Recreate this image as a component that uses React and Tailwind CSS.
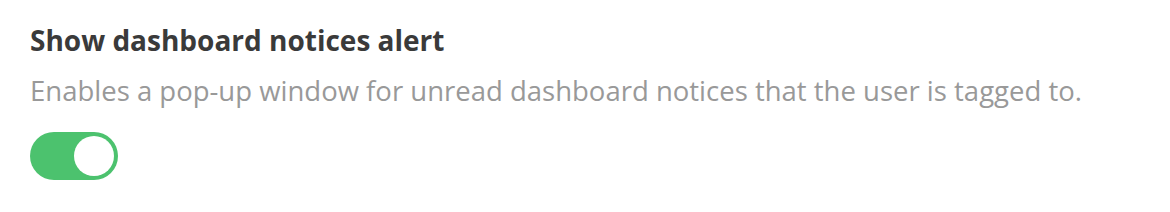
export default function App() {
  return (
    <div className="w-[1170px] h-[212px] bg-white" style={{ fontFamily: '"Open Sans", sans-serif' }}>
      <div className="pl-[30px] pt-[22px]">
        <h2 className="text-[28px] leading-[36px] font-bold text-[#3a3a3a]">Show dashboard notices alert</h2>
        <p className="mt-[15px] text-[27.5px] leading-[36px] text-[#999999]">
          Enables a pop-up window for unread dashboard notices that the user is tagged to.
        </p>
        <button
          type="button"
          role="switch"
          aria-checked="true"
          className="mt-[23px] flex h-[48px] w-[88px] items-center justify-end rounded-full bg-[#4cc26e] pr-[4px]"
        >
          <span className="block h-[40px] w-[40px] rounded-full bg-white" />
        </button>
      </div>
    </div>
  );
}
